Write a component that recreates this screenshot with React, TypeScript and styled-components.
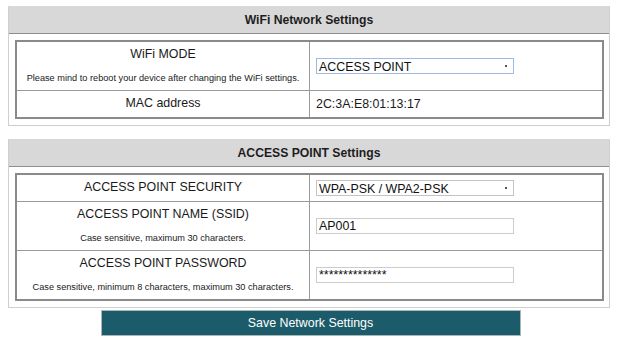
import React from "react";
import styled, { createGlobalStyle } from "styled-components";

const Global = createGlobalStyle`
  html, body { margin: 0; padding: 0; background: #fff; }
  body { font-family: "Liberation Sans", Arial, sans-serif; color: #1a1a1a; }
`;

const Page = styled.div`
  width: 602px;
  margin: 6px 0 0 8px;
  display: flex;
  flex-direction: column;
`;

const Section = styled.section<{ $gap?: number }>`
  border: 1px solid #cfcfcf;
  border-top-color: #d8d8d8;
  margin-bottom: ${(p) => p.$gap ?? 0}px;
  padding-bottom: 6px;
`;

const Header = styled.div`
  height: 26px;
  background: #d8d8d8;
  border-bottom: 1px solid #8e8e8e;
  display: flex;
  align-items: center;
  justify-content: center;
  font-weight: bold;
  font-size: 12.2px;
  color: #1e1e1e;
`;

const Table = styled.table`
  width: 589px;
  margin: 6px 0 0 6px;
  border-collapse: collapse;
  border: 2px solid #8a8a8a;
`;

const Cell = styled.td<{ $label?: boolean }>`
  width: 50%;
  border: 1px solid #9a9a9a;
  vertical-align: middle;
  text-align: ${(p) => (p.$label ? "center" : "left")};
  padding: ${(p) => (p.$label ? "4px 4px 6px" : "4px 6px")};
  font-size: 12.4px;
  line-height: 16px;
`;

const Label = styled.div`
  font-size: 12.4px;
  line-height: 16px;
`;

const Note = styled.div`
  font-size: 9.2px;
  line-height: 12px;
  margin-top: 10px;
  margin-bottom: 0;
`;

const SelectWrap = styled.div<{ $focus?: boolean }>`
  position: relative;
  width: 198px;
  height: 16px;
  box-sizing: border-box;
  border: 1px solid ${(p) => (p.$focus ? "#9fb9e6" : "#c4c4c4")};
  background: #fff;
  &::after {
    content: "";
    position: absolute;
    right: 6px;
    top: 6px;
    width: 2px;
    height: 2px;
    background: #555;
  }
`;

const Select = styled.select`
  appearance: none;
  -webkit-appearance: none;
  border: none;
  outline: none;
  background: transparent;
  width: 100%;
  height: 14px;
  padding: 0 0 0 2px;
  margin: 0;
  font-family: "Liberation Sans", Arial, sans-serif;
  font-size: 12.4px;
  line-height: 14px;
  color: #111;
`;

const Input = styled.input`
  width: 198px;
  height: 16px;
  box-sizing: border-box;
  border: 1px solid #cccccc;
  padding: 0 2px;
  margin: 0;
  font-family: "Liberation Sans", Arial, sans-serif;
  font-size: 12.4px;
  color: #111;
  outline: none;
  display: block;
`;

const Button = styled.button`
  align-self: center;
  width: 420px;
  height: 26px;
  margin: 2px 0 0 3px;
  background: #1c5b69;
  border: 1px solid #a9b6ba;
  color: #fff;
  font-family: "Liberation Sans", Arial, sans-serif;
  font-size: 12.4px;
  padding: 0;
  cursor: pointer;
`;

export default function App() {
  return (
    <>
      <Global />
      <Page>
        <Section $gap={13}>
          <Header>WiFi Network Settings</Header>
          <Table>
            <tbody>
              <tr>
                <Cell $label>
                  <Label>WiFi MODE</Label>
                  <Note>Please mind to reboot your device after changing the WiFi settings.</Note>
                </Cell>
                <Cell>
                  <SelectWrap $focus>
                    <Select defaultValue="ap">
                      <option value="ap">ACCESS POINT</option>
                      <option value="client">CLIENT</option>
                    </Select>
                  </SelectWrap>
                </Cell>
              </tr>
              <tr>
                <Cell $label>MAC address</Cell>
                <Cell>2C:3A:E8:01:13:17</Cell>
              </tr>
            </tbody>
          </Table>
        </Section>
        <Section>
          <Header>ACCESS POINT Settings</Header>
          <Table>
            <tbody>
              <tr>
                <Cell $label>ACCESS POINT SECURITY</Cell>
                <Cell>
                  <SelectWrap>
                    <Select defaultValue="wpa">
                      <option value="wpa">WPA-PSK / WPA2-PSK</option>
                      <option value="open">OPEN</option>
                    </Select>
                  </SelectWrap>
                </Cell>
              </tr>
              <tr>
                <Cell $label>
                  <Label>ACCESS POINT NAME (SSID)</Label>
                  <Note>Case sensitive, maximum 30 characters.</Note>
                </Cell>
                <Cell>
                  <Input defaultValue="AP001" />
                </Cell>
              </tr>
              <tr>
                <Cell $label>
                  <Label>ACCESS POINT PASSWORD</Label>
                  <Note>Case sensitive, minimum 8 characters, maximum 30 characters.</Note>
                </Cell>
                <Cell>
                  <Input defaultValue="**************" />
                </Cell>
              </tr>
            </tbody>
          </Table>
        </Section>
        <Button>Save Network Settings</Button>
      </Page>
    </>
  );
}
